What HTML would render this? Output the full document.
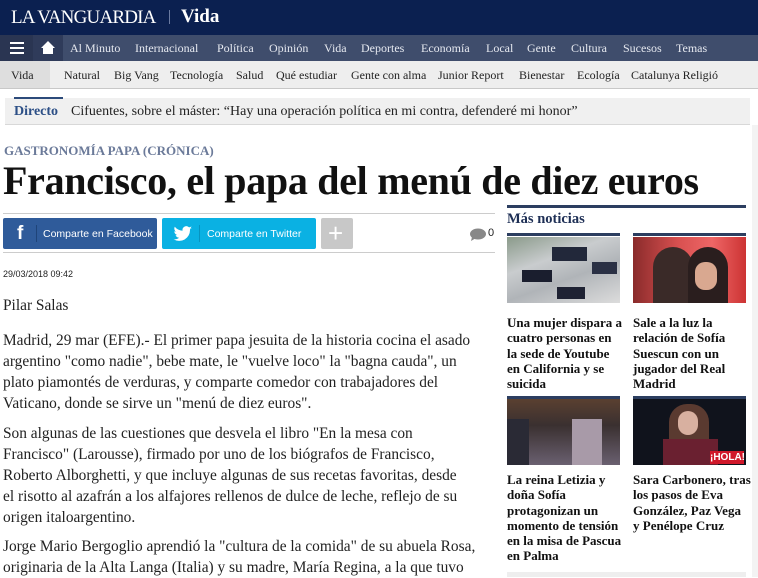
<!DOCTYPE html>
<html><head><meta charset="utf-8"><style>
*{margin:0;padding:0;box-sizing:border-box}
body{width:758px;height:577px;overflow:hidden;background:#fff;font-family:"Liberation Serif",serif;color:#222;position:relative}
.hdr{position:absolute;left:0;top:0;width:758px;height:35px;background:#0b2050;color:#fff}
.logo{position:absolute;left:11px;top:7px;font-size:19px;letter-spacing:-0.8px}
.sep{position:absolute;left:169px;top:10px;width:1px;height:14px;background:#6a7aa0}
.sec{position:absolute;left:181px;top:6px;font-size:19px;font-weight:bold}
.nav{position:absolute;left:0;top:35px;width:758px;height:26px;background:#3f4d6c;color:#e6e9f0;font-size:12px}
.nav span{position:absolute;top:6px}
.burger{position:absolute;left:0;top:0;width:33px;height:26px;background:#2a3552}
.home{position:absolute;left:33px;top:0;width:30px;height:26px;background:#2f3b5a}
.sub{position:absolute;left:0;top:61px;width:758px;height:28px;background:#eeeeee;border-bottom:1px solid #c8c8c8;font-size:12px;color:#222}
.sub span{position:absolute;top:7px}
.vida{position:absolute;left:0;top:0;width:50px;height:27px;background:#dedede}
.dirbar{position:absolute;left:5px;top:98px;width:745px;height:27px;background:#f0f0f0;border-bottom:1px solid #d8d8d8}
.dirtop{position:absolute;left:14px;top:97px;width:49px;height:2px;background:#2c4a7a}
.dirl{position:absolute;left:14px;top:104px;font-size:14px;font-weight:bold;color:#2c4f86}
.dirt{position:absolute;left:71px;top:104px;font-size:14px;color:#222}
.kick{position:absolute;left:4px;top:143px;font-size:13px;font-weight:bold;color:#6b7a99}
h1{position:absolute;left:3px;top:157px;font-size:40px;font-weight:bold;color:#111;letter-spacing:-0.3px;white-space:nowrap}
.line{position:absolute;left:3px;height:1px;background:#ccc;width:492px}
.btn{position:absolute;top:218px;height:31px;border-radius:2px;color:#fff;font-family:"Liberation Sans",sans-serif;font-size:10.5px;white-space:nowrap}
.date{position:absolute;left:3px;top:269px;font-family:"Liberation Sans",sans-serif;font-size:9px;color:#222}
.body{position:absolute;left:3px;font-size:15.4px;line-height:21px;color:#222;white-space:nowrap}
.bar{position:absolute;height:3px;background:#2c3e60}
.img{position:absolute;width:113px;height:66px}
.t{position:absolute;font-size:13px;font-weight:bold;line-height:15.3px;color:#111;white-space:nowrap}
</style></head><body>
<div class="hdr"><div class="logo">LA VANGUARDIA</div><div class="sep"></div><div class="sec">Vida</div></div>
<div class="nav"><div class="burger"><div style="position:absolute;left:10px;top:7px;width:14px;height:2px;background:#fff;box-shadow:0 5px 0 #fff,0 10px 0 #fff"></div></div>
<div class="home"><svg width="30" height="26"><path d="M8 13 L15 6 L22 13 L20 13 L20 19 L10 19 L10 13Z" fill="#fff"/></svg></div>
<span style="left:70px">Al Minuto</span><span style="left:135px">Internacional</span><span style="left:217px">Política</span><span style="left:269px">Opinión</span><span style="left:324px">Vida</span><span style="left:361px">Deportes</span><span style="left:421px">Economía</span><span style="left:486px">Local</span><span style="left:527px">Gente</span><span style="left:571px">Cultura</span><span style="left:623px">Sucesos</span><span style="left:676px">Temas</span></div>
<div class="sub"><div class="vida"></div><span style="left:11px">Vida</span><span style="left:64px">Natural</span><span style="left:114px">Big Vang</span><span style="left:170px">Tecnología</span><span style="left:236px">Salud</span><span style="left:276px">Qué estudiar</span><span style="left:351px">Gente con alma</span><span style="left:438px">Junior Report</span><span style="left:519px">Bienestar</span><span style="left:577px">Ecología</span><span style="left:631px">Catalunya Religió</span></div>
<div class="dirbar"></div><div class="dirtop"></div>
<div class="dirl">Directo</div><div class="dirt">Cifuentes, sobre el máster: “Hay una operación política en mi contra, defenderé mi honor”</div>
<div class="kick">GASTRONOMÍA PAPA (CRÓNICA)</div>
<h1>Francisco, el papa del menú de diez euros</h1>
<div class="line" style="top:213px"></div>
<div class="btn" style="left:3px;width:154px;background:#2f5b9a"><span style="position:absolute;left:14px;top:5px;font-size:19px;font-weight:bold">f</span><div style="position:absolute;left:33px;top:7px;width:1px;height:17px;background:#1f4479"></div><span style="position:absolute;left:40px;top:10px">Comparte en Facebook</span></div>
<div class="btn" style="left:162px;width:154px;background:#0ab1e3"><svg style="position:absolute;left:11px;top:8px" width="20" height="16" viewBox="0 0 20 16"><path d="M19 2c-.7.3-1.4.5-2.2.6.8-.5 1.4-1.2 1.7-2.1-.8.4-1.6.7-2.4.9A3.8 3.8 0 0 0 9.6 4.8 10.8 10.8 0 0 1 1.8.8a3.8 3.8 0 0 0 1.2 5c-.6 0-1.2-.2-1.7-.5 0 1.8 1.300 3.4 3 3.7-.6.2-1.2.2-1.7.1.5 1.5 1.9 2.6 3.5 2.6A7.6 7.6 0 0 1 .5 13.3 10.8 10.8 0 0 0 17 3.8V3.3c.8-.4 1.5-1 2-1.3z" fill="#fff"/></svg><div style="position:absolute;left:37px;top:7px;width:1px;height:17px;background:#0794c0"></div><span style="position:absolute;left:45px;top:10px">Comparte en Twitter</span></div>
<div class="btn" style="left:321px;width:32px;background:#c8c8c8"><span style="position:absolute;left:7px;top:0px;font-size:26px;color:#fff">+</span></div>
<svg style="position:absolute;left:469px;top:228px" width="18" height="13"><ellipse cx="9" cy="6" rx="8" ry="5.5" fill="#888"/><path d="M3 9 L2 13 L7 10Z" fill="#888"/></svg>
<span style="position:absolute;left:488px;top:227px;font-family:'Liberation Sans',sans-serif;font-size:11px">0</span>
<div class="line" style="top:252px"></div>
<div class="date">29/03/2018 09:42</div>
<div class="body" style="top:295px">Pilar Salas</div>
<div class="body" style="top:330px">Madrid, 29 mar (EFE).- El primer papa jesuita de la historia cocina el asado<br>argentino "como nadie", bebe mate, le "vuelve loco" la "bagna cauda", un<br>plato piamontés de verduras, y comparte comedor con trabajadores del<br>Vaticano, donde se sirve un "menú de diez euros".</div>
<div class="body" style="top:423px">Son algunas de las cuestiones que desvela el libro "En la mesa con<br>Francisco" (Larousse), firmado por uno de los biógrafos de Francisco,<br>Roberto Alborghetti, y que incluye algunas de sus recetas favoritas, desde<br>el risotto al azafrán a los alfajores rellenos de dulce de leche, reflejo de su<br>origen italoargentino.</div>
<div class="body" style="top:536px">Jorge Mario Bergoglio aprendió la "cultura de la comida" de su abuela Rosa,<br>originaria de la Alta Langa (Italia) y su madre, María Regina, a la que tuvo</div>
<div style="position:absolute;left:752px;top:125px;width:6px;height:452px;background:#f3f3f3"></div>
<div class="bar" style="left:507px;top:205px;width:239px"></div>
<div style="position:absolute;left:507px;top:211px;font-size:14.5px;font-weight:bold;color:#1e2f55">Más noticias</div>
<div class="bar" style="left:507px;top:233px;width:113px"></div><div class="bar" style="left:633px;top:233px;width:113px"></div>
<div class="img" style="left:507px;top:237px;background:linear-gradient(160deg,#8a9a8a 0%,#c9ccce 35%,#b0b4b8 60%,#dcdcdc 100%)"><div style="position:absolute;left:15px;top:33px;width:30px;height:12px;background:#1a1e2e"></div><div style="position:absolute;left:45px;top:10px;width:35px;height:14px;background:#22283a"></div><div style="position:absolute;left:50px;top:50px;width:28px;height:12px;background:#1e2233"></div><div style="position:absolute;left:85px;top:25px;width:25px;height:12px;background:#2a3044"></div></div>
<div class="img" style="left:633px;top:237px;background:linear-gradient(90deg,#8a2b2b,#d85050 40%,#e66 70%,#c33)"><div style="position:absolute;left:20px;top:10px;width:40px;height:56px;background:#3a2a28;border-radius:20px 20px 0 0"></div><div style="position:absolute;left:55px;top:10px;width:40px;height:56px;background:#2a1e1e;border-radius:20px 20px 0 0"></div><div style="position:absolute;left:62px;top:25px;width:22px;height:28px;background:#d9a890;border-radius:10px"></div></div>
<div class="t" style="left:507px;top:315px">Una mujer dispara a<br>cuatro personas en<br>la sede de Youtube<br>en California y se<br>suicida</div>
<div class="t" style="left:633px;top:315px">Sale a la luz la<br>relación de Sofía<br>Suescun con un<br>jugador del Real<br>Madrid</div>
<div class="bar" style="left:507px;top:396px;width:113px"></div><div class="bar" style="left:633px;top:396px;width:113px"></div>
<div class="img" style="left:507px;top:399px;background:linear-gradient(180deg,#5a4030,#3a3030 40%,#6a6070)"><div style="position:absolute;left:65px;top:20px;width:30px;height:46px;background:#a89aa8"></div><div style="position:absolute;left:0;top:20px;width:22px;height:46px;background:#2a2a35"></div></div>
<div class="img" style="left:633px;top:399px;background:#10131c"><div style="position:absolute;left:36px;top:5px;width:40px;height:61px;background:#5a3a30;border-radius:18px 18px 0 0"></div><div style="position:absolute;left:45px;top:12px;width:20px;height:24px;background:#d8b0a0;border-radius:10px"></div><div style="position:absolute;left:30px;top:40px;width:55px;height:26px;background:#6a2030"></div><div style="position:absolute;left:77px;top:52px;width:34px;height:13px;background:#d0182a;color:#fff;font-family:'Liberation Sans',sans-serif;font-size:10px;font-weight:bold;text-align:center;line-height:13px">¡HOLA!</div></div>
<div class="t" style="left:507px;top:472px">La reina Letizia y<br>doña Sofía<br>protagonizan un<br>momento de tensión<br>en la misa de Pascua<br>en Palma</div>
<div class="t" style="left:633px;top:472px">Sara Carbonero, tras<br>los pasos de Eva<br>González, Paz Vega<br>y Penélope Cruz</div>
<div style="position:absolute;left:507px;top:572px;width:239px;height:5px;background:#eee"></div>
</body></html>
